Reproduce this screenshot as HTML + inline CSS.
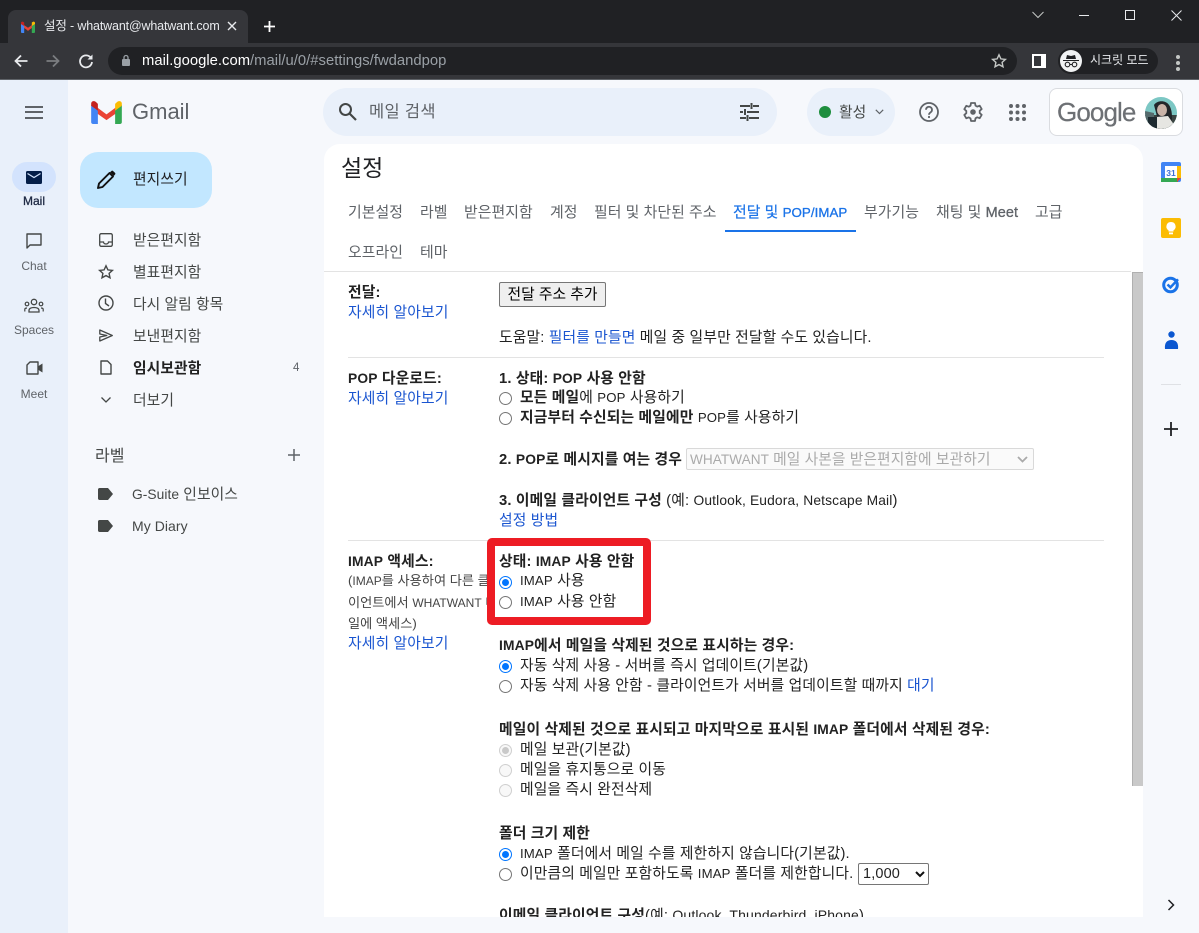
<!DOCTYPE html>
<html lang="ko"><head><meta charset="utf-8"><title>설정</title>
<style>
*{box-sizing:border-box}
html,body{margin:0;padding:0}
body{width:1199px;height:933px;overflow:hidden;position:relative;background:#f6f8fc;font-family:"Liberation Sans","Noto Sans CJK KR",sans-serif;font-size:14px;color:#222}
.a{position:absolute}
.t{position:absolute;white-space:nowrap;line-height:20px;font-size:14.8px;letter-spacing:.14px}
i{font-style:normal;font-size:13.2px}
.b{font-weight:700}
.l{color:#1a55d0}
.n{color:#444746;font-size:14.8px;margin-top:2px;letter-spacing:.05px}
.tab{color:#5f6368;font-size:14.9px;top:203px;letter-spacing:.05px}
.s{color:#5f6368;font-size:12px;text-align:center;width:68px;left:0;letter-spacing:0;margin-top:1px}
.r{position:absolute;width:13px;height:13px;border-radius:50%;border:1px solid #767676;background:#fff}
.r.on{border:1.5px solid #0075ff}
.r.on:after{content:"";position:absolute;left:1.5px;top:1.5px;width:7px;height:7px;border-radius:50%;background:#0075ff}
.r.d{border-color:#cfcfcf;background:#f8f8f8}
.hr{position:absolute;height:1px;background:#e3e3e3}
svg{position:absolute;overflow:visible}
</style></head><body>

<!-- Chrome -->
<div class="a" style="left:0;top:0;width:1199px;height:43px;background:#202124"></div>
<div class="a" style="left:8px;top:10px;width:240px;height:33px;background:#35363a;border-radius:8px 8px 0 0"></div>
<svg style="left:21px;top:21px" width="14" height="12" viewBox="0 0 14 12"><path d="M0 2l7 4.800L14 2v3L7 9.500 0 5z" fill="#ea4335"/><path d="M3 5l4 3 4-3v1L7 10 3 6z" fill="#ea4335"/><path d="M0 3v8c0 .6.400 1 1 1h2.200V5z" fill="#4285f4"/><path d="M10.800 12H13c.6 0 1-.4 1-1V3l-3.200 2z" fill="#34a853"/><path d="M10.800 1.500V5L14 3V2c0-1.200-1.200-1.700-2-1.200z" fill="#fbbc04"/><path d="M0 3V2c0-1.200 1.200-1.700 2-1.200l1.200.7V5z" fill="#c5221f"/></svg>
<div class="t" style="left:44px;top:16px;color:#e8eaed;font-size:12.500px;width:175px;overflow:hidden;letter-spacing:-.15px">설정 - whatwant@whatwant.com</div>
<svg style="left:227px;top:21px" width="10" height="10"><path d="M1 1l8 8M9 1l-8 8" stroke="#e8eaed" stroke-width="1.400"/></svg>
<svg style="left:263px;top:20px" width="13" height="13"><path d="M6.500 1v11M1 6.500h11" stroke="#fff" stroke-width="1.800"/></svg>
<svg style="left:1032px;top:11px" width="12" height="8"><path d="M.5 1l5.500 5.500L11.500 1" fill="none" stroke="#c4c7c5" stroke-width="1"/></svg>
<div class="a" style="left:1079px;top:15px;width:10px;height:1px;background:#e8eaed"></div>
<div class="a" style="left:1125px;top:10px;width:10px;height:10px;border:1px solid #e8eaed"></div>
<svg style="left:1171px;top:10px" width="11" height="11"><path d="M.5.500l10 10M10.500.500l-10 10" stroke="#e8eaed" stroke-width="1"/></svg>
<div class="a" style="left:0;top:43px;width:1199px;height:36px;background:#35363a"></div>
<div class="a" style="left:0;top:79px;width:1199px;height:1px;background:#5f6368"></div>
<svg style="left:13px;top:53px" width="16" height="16"><path d="M14.500 8H2.500M8 2.500L2.500 8 8 13.500" fill="none" stroke="#e8eaed" stroke-width="1.800"/></svg>
<svg style="left:45px;top:53px" width="16" height="16"><path d="M1.500 8h12M8 2.500L13.500 8 8 13.500" fill="none" stroke="#7b7d80" stroke-width="1.800"/></svg>
<svg style="left:78px;top:53px" width="16" height="16"><path d="M13 5A6 6 0 1 0 14 9" fill="none" stroke="#e8eaed" stroke-width="1.800"/><path d="M14.500 1.500v5h-5z" fill="#e8eaed"/></svg>
<div class="a" style="left:108px;top:47px;width:909px;height:28px;border-radius:14px;background:#202124"></div>
<svg style="left:121px;top:54px" width="10" height="13"><rect x="1" y="5" width="8" height="7" rx="1" fill="#9aa0a6"/><path d="M3 5V3.500a2 2 0 0 1 4 0V5" fill="none" stroke="#9aa0a6" stroke-width="1.300"/></svg>
<div class="t" style="left:142px;top:51px;font-size:14.800px;color:#9aa0a6;letter-spacing:.02px"><span style="color:#fff">mail.google.com</span>/mail/u/0/#settings/fwdandpop</div>
<svg style="left:991px;top:53px" width="16" height="16" viewBox="0 0 16 16"><path d="M8 1.800l1.900 4.100 4.500.5-3.300 3 .9 4.400L8 11.600l-4 2.200.9-4.400-3.300-3 4.500-.5z" fill="none" stroke="#c4c7c5" stroke-width="1.400"/></svg>
<div class="a" style="left:1032px;top:54px;width:14px;height:14px;background:#fff"></div>
<div class="a" style="left:1034px;top:56px;width:7px;height:10px;background:#35363a"></div>
<div class="a" style="left:1058px;top:48px;width:100px;height:26px;border-radius:13px;background:#202124"></div>
<div class="a" style="left:1060px;top:50px;width:22px;height:22px;border-radius:50%;background:#f1f3f4"></div>
<svg style="left:1063px;top:54px" width="16" height="14" viewBox="0 0 16 14"><path d="M0 6h16v1H0zM3 5l1-4 4 1 4-1 1 4z" fill="#202124"/><circle cx="4.500" cy="10.500" r="2.300" fill="none" stroke="#202124" stroke-width="1.100"/><circle cx="11.500" cy="10.500" r="2.300" fill="none" stroke="#202124" stroke-width="1.100"/><path d="M6.800 10.500h2.400" stroke="#202124"/></svg>
<div class="t" style="left:1090px;top:50px;color:#e8eaed;font-size:12px;letter-spacing:0">시크릿 모드</div>
<div class="a" style="left:1176px;top:55px;width:4px;height:4px;border-radius:50%;background:#c4c7c5;box-shadow:0 6px 0 #c4c7c5,0 12px 0 #c4c7c5"></div>

<!-- Left rail -->
<div class="a" style="left:0;top:80px;width:68px;height:853px;background:#e9f0fa"></div>
<div class="a" style="left:25px;top:106px;width:18px;height:2px;background:#5f6368;box-shadow:0 5px 0 #5f6368,0 11px 0 #5f6368"></div>
<svg style="left:91px;top:101px" width="31" height="23" viewBox="0 0 32 24"><path d="M2 3.500l14 10.500L30 3.500V10L16 20 2 10z" fill="#ea4335"/><path d="M0 4v18c0 1 .9 2 2 2h5V10z" fill="#4285f4"/><path d="M25 24h5c1.100 0 2-1 2-2V4l-7 6z" fill="#34a853"/><path d="M25 3v7l7-5V3c0-3-3-3.500-5-2z" fill="#fbbc04"/><path d="M0 3c0-3 3-3.500 5-2l2 2v7L0 5z" fill="#c5221f"/></svg>
<div class="t" style="left:132px;top:98px;font-size:22px;line-height:28px;color:#5f6368;letter-spacing:0">Gmail</div>

<div class="a" style="left:12px;top:162px;width:44px;height:30px;border-radius:15px;background:#d3e3fd"></div>
<svg style="left:26px;top:171px" width="16" height="13"><rect width="16" height="13" rx="1.500" fill="#041e49"/><path d="M1.500 2.500L8 6.500l6.500-4" fill="none" stroke="#d3e3fd" stroke-width="1.200"/></svg>
<div class="t s" style="top:190px;color:#1f2a44;-webkit-text-stroke:.3px #1f2a44">Mail</div>
<svg style="left:26px;top:233px" width="16" height="16" viewBox="0 0 16 16"><path d="M1 1h14v11H4l-3 3z" fill="none" stroke="#444746" stroke-width="1.400" stroke-linejoin="round"/></svg>
<div class="t s" style="top:255px">Chat</div>
<svg style="left:24px;top:298px" width="20" height="15" viewBox="0 0 20 15"><circle cx="10" cy="4" r="2.700" fill="none" stroke="#444746" stroke-width="1.300"/><circle cx="3" cy="6" r="1.800" fill="none" stroke="#444746" stroke-width="1.200"/><circle cx="17" cy="6" r="1.800" fill="none" stroke="#444746" stroke-width="1.200"/><path d="M5 14v-1.500c0-2 2.200-3 5-3s5 1 5 3V14z" fill="none" stroke="#444746" stroke-width="1.300"/><path d="M0.800 13.500v-2c0-1 1-1.500 2.200-1.500M19.200 13.500v-2c0-1-1-1.500-2.200-1.500" fill="none" stroke="#444746" stroke-width="1.200"/></svg>
<div class="t s" style="top:319px">Spaces</div>
<svg style="left:26px;top:361px" width="17" height="14" viewBox="0 0 17 14"><path d="M4 1h8v12H1V4z" fill="none" stroke="#444746" stroke-width="1.400" stroke-linejoin="round"/><path d="M12.500 5l4-2.500v9l-4-2.500z" fill="#444746"/></svg>
<div class="t s" style="top:383px">Meet</div>

<!-- Nav -->
<div class="a" style="left:80px;top:152px;width:132px;height:56px;border-radius:18px;background:#c2e7ff"></div>
<svg style="left:96px;top:170px" width="20" height="20" viewBox="0 0 20 20"><path d="M2 18l1-4.500L13.500 3l3.500 3.500L6.500 17z" fill="none" stroke="#111" stroke-width="1.900" stroke-linejoin="round"/><path d="M14 2.200l3.800 3.800 1-1.200a1.500 1.500 0 0 0 0-2.200l-1.500-1.400a1.500 1.500 0 0 0-2.100 0z" fill="#111"/></svg>
<div class="t n" style="left:133px;top:168px;color:#202124">편지쓰기</div>

<svg style="left:99px;top:233px" width="14" height="14" viewBox="0 0 14 14"><rect x=".7" y=".7" width="12.600" height="12.600" rx="1.500" fill="none" stroke="#444746" stroke-width="1.300"/><path d="M1 9h3.500c0 1.300 1.200 2 2.500 2s2.500-.7 2.500-2H13" fill="none" stroke="#444746" stroke-width="1.300"/></svg>
<div class="t n" style="left:133px;top:229px">받은편지함</div>
<svg style="left:98px;top:264px" width="16" height="16" viewBox="0 0 16 16"><path d="M8 1.800l1.900 4.100 4.500.5-3.300 3 .9 4.400L8 11.600l-4 2.200.9-4.400-3.300-3 4.500-.5z" fill="none" stroke="#444746" stroke-width="1.400"/></svg>
<div class="t n" style="left:133px;top:261px">별표편지함</div>
<svg style="left:98px;top:295px" width="16" height="16" viewBox="0 0 16 16"><circle cx="8" cy="8" r="7" fill="none" stroke="#444746" stroke-width="1.400"/><path d="M7.500 3.500V8.500l3.500 2.500" fill="none" stroke="#444746" stroke-width="1.400"/></svg>
<div class="t n" style="left:133px;top:293px">다시 알림 항목</div>
<svg style="left:99px;top:329px" width="15" height="13" viewBox="0 0 15 13"><path d="M.8 1l12.500 5.500L.8 12V8l7-1.500-7-1.500z" fill="none" stroke="#444746" stroke-width="1.300" stroke-linejoin="round"/></svg>
<div class="t n" style="left:133px;top:325px">보낸편지함</div>
<svg style="left:100px;top:360px" width="12" height="15" viewBox="0 0 12 15"><path d="M1 1h6.500L11 4.500V14H1z" fill="none" stroke="#444746" stroke-width="1.400" stroke-linejoin="round"/></svg>
<div class="t n b" style="left:133px;top:357px;color:#222">임시보관함</div>
<div class="t" style="left:293px;top:358px;font-size:11.500px;color:#5f6368">4</div>
<svg style="left:100px;top:396px" width="12" height="8"><path d="M1.500 1.500L6 6l4.500-4.500" fill="none" stroke="#444746" stroke-width="1.300"/></svg>
<div class="t n" style="left:133px;top:389px">더보기</div>

<div class="t" style="left:95px;top:447px;font-size:16px;color:#444746;letter-spacing:0">라벨</div>
<svg style="left:288px;top:449px" width="12" height="12"><path d="M6 0v12M0 6h12" stroke="#5f6368" stroke-width="1.500"/></svg>
<svg style="left:98px;top:488px" width="16" height="12"><path d="M1.500 0H10l5 6-5 6H1.500C.7 12 0 11.300 0 10.500v-9C0 .7.700 0 1.500 0z" fill="#444746"/></svg>
<div class="t n" style="left:132px;top:483px"><i style="font-size:13.800px">G-Suite</i> 인보이스</div>
<svg style="left:98px;top:520px" width="16" height="12"><path d="M1.500 0H10l5 6-5 6H1.500C.7 12 0 11.300 0 10.500v-9C0 .7.700 0 1.500 0z" fill="#444746"/></svg>
<div class="t n" style="left:132px;top:514px"><i style="font-size:14px">My Diary</i></div>

<!-- Top search -->
<div class="a" style="left:323px;top:88px;width:454px;height:48px;border-radius:24px;background:#e9f0fa"></div>
<svg style="left:338px;top:102px" width="20" height="20" viewBox="0 0 20 20"><circle cx="7.500" cy="7.500" r="5.500" fill="none" stroke="#444746" stroke-width="2"/><path d="M11.500 11.500L18 18" stroke="#444746" stroke-width="2.200"/></svg>
<div class="t" style="left:369px;top:102px;font-size:16.500px;color:#5f6368;letter-spacing:.3px">메일 검색</div>
<svg style="left:740px;top:103px" width="19" height="18" viewBox="0 0 19 18"><path d="M0 3h10M13 3h6M0 9h3M7 9h12M0 15h6M9 15h10M11.500 0v6M5 6v6M7.500 12v6" stroke="#444746" stroke-width="2" fill="none"/></svg>

<div class="a" style="left:807px;top:88px;width:88px;height:48px;border-radius:24px;background:#e9f0fa"></div>
<div class="a" style="left:819px;top:106px;width:12px;height:12px;border-radius:50%;background:#1e8e3e"></div>
<div class="t" style="left:839px;top:103px;font-size:14.800px;color:#444746;letter-spacing:0">활성</div>
<svg style="left:875px;top:109px" width="9" height="6"><path d="M.8.800L4.500 4.500 8.200.800" fill="none" stroke="#5f6368" stroke-width="1.200"/></svg>
<svg style="left:919px;top:102px" width="20" height="20" viewBox="0 0 20 20"><circle cx="10" cy="10" r="9" fill="none" stroke="#5f6368" stroke-width="1.800"/><path d="M7 7.800a3 3 0 1 1 4.600 2.500c-1 .7-1.600 1.200-1.600 2.400" fill="none" stroke="#5f6368" stroke-width="1.800"/><circle cx="10" cy="15" r="1.100" fill="#5f6368"/></svg>
<svg style="left:963px;top:102px" width="20" height="20" viewBox="0 0 20 20"><path d="M8 1h4l.5 2.600 1.700 1 2.500-.9 2 3.400-2 1.700v2.300l2 1.700-2 3.400-2.500-.9-1.700 1L12 19H8l-.5-2.600-1.700-1-2.500.9-2-3.400 2-1.700V8.900l-2-1.700 2-3.400 2.500.9 1.700-1z" fill="none" stroke="#5f6368" stroke-width="1.800" stroke-linejoin="round"/><circle cx="10" cy="10" r="2.800" fill="#5f6368"/></svg>
<svg style="left:1009px;top:104px" width="17" height="17"><g fill="#5f6368"><circle cx="2" cy="2" r="2"/><circle cx="8.500" cy="2" r="2"/><circle cx="15" cy="2" r="2"/><circle cx="2" cy="8.500" r="2"/><circle cx="8.500" cy="8.500" r="2"/><circle cx="15" cy="8.500" r="2"/><circle cx="2" cy="15" r="2"/><circle cx="8.500" cy="15" r="2"/><circle cx="15" cy="15" r="2"/></g></svg>
<div class="a" style="left:1049px;top:88px;width:134px;height:48px;border-radius:8px;background:#fff;border:1px solid #dadce0"></div>
<div class="t" style="left:1057px;top:94px;font-size:26px;line-height:36px;color:#6d7074;letter-spacing:-.9px;-webkit-text-stroke:.2px #6d7074">Google</div>
<svg style="left:1145px;top:97px" width="32" height="32" viewBox="0 0 32 32"><clipPath id="av"><circle cx="16" cy="16" r="16"/></clipPath><g clip-path="url(#av)"><rect width="32" height="32" fill="#7cc7c4"/><rect y="18" width="32" height="14" fill="#3b4442"/><path d="M0 14l9 2v16H0z" fill="#556a6c"/><path d="M9 8c3-5 12-5 15 0 3 4 4 12 2 24H12c2-8-1-16-3-24z" fill="#22262a"/><ellipse cx="17" cy="13" rx="5" ry="6" fill="#c9b3a8"/><path d="M11 20l12-1 9 13H11z" fill="#e6e6e2"/><path d="M3 20h9v12H3z" fill="#1d2a30"/></g></svg>

<!-- Main card -->
<div class="a" style="left:324px;top:144px;width:819px;height:773px;border-radius:16px 16px 0 0;background:#fff;overflow:hidden">
<div class="a" style="left:808px;top:128px;width:11px;height:514px;background:#c9c9c9;border-left:1px solid #b0b0b0;border-top:1px solid #b0b0b0"></div>
</div>

<div class="t" style="left:341px;top:153px;font-size:23px;line-height:30px;color:#202124;letter-spacing:0">설정</div>
<div class="t tab" style="left:348px">기본설정</div>
<div class="t tab" style="left:420px">라벨</div>
<div class="t tab" style="left:464px">받은편지함</div>
<div class="t tab" style="left:550px">계정</div>
<div class="t tab" style="left:594px">필터 및 차단된 주소</div>
<div class="t tab" style="left:733px;color:#1a73e8;-webkit-text-stroke:.2px #1a73e8">전달 및 <i style="font-size:13.300px;-webkit-text-stroke:.3px #1a73e8">POP/IMAP</i></div>
<div class="a" style="left:725px;top:230px;width:131px;height:2px;background:#1a73e8"></div>
<div class="t tab" style="left:864px">부가기능</div>
<div class="t tab" style="left:936px">채팅 및 <i style="font-size:14.500px;-webkit-text-stroke:.3px #5f6368">Meet</i></div>
<div class="t tab" style="left:1035px">고급</div>
<div class="t tab" style="left:348px;top:243px">오프라인</div>
<div class="t tab" style="left:420px;top:243px">테마</div>
<div class="hr" style="left:324px;top:271px;width:807px"></div>

<!-- Forwarding -->
<div class="t b" style="left:348px;top:283px">전달:</div>
<div class="t l" style="left:348px;top:303px">자세히 알아보기</div>
<div class="a" style="left:499px;top:282px;width:107px;height:25px;border:1px solid #767676;border-radius:2px;background:#efefef;text-align:center;line-height:25px;font-size:14.800px;color:#000">전달 주소 추가</div>
<div class="t" style="left:499px;top:328px">도움말: <span class="l">필터를 만들면</span> 메일 중 일부만 전달할 수도 있습니다.</div>
<div class="hr" style="left:348px;top:357px;width:756px"></div>

<!-- POP -->
<div class="t b" style="left:348px;top:369px"><i style="font-size:13.800px">POP</i> 다운로드:</div>
<div class="t l" style="left:348px;top:389px">자세히 알아보기</div>
<div class="t b" style="left:499px;top:369px">1. 상태: <i style="font-size:13.800px">POP</i> 사용 안함</div>
<div class="r" style="left:499px;top:392px"></div>
<div class="t" style="left:520px;top:388px"><b>모든 메일</b>에 <i>POP</i> 사용하기</div>
<div class="r" style="left:499px;top:412px"></div>
<div class="t" style="left:520px;top:408px"><b>지금부터 수신되는 메일에만</b> <i>POP</i>를 사용하기</div>
<div class="t b" style="left:499px;top:450px">2. <i style="font-size:13.800px">POP</i>로 메시지를 여는 경우</div>
<div class="a" style="left:686px;top:448px;width:348px;height:22px;border:1px solid #d9d9d9;border-radius:2px;background:#fafafa"></div>
<div class="t" style="left:690px;top:450px;color:#aaa;letter-spacing:.05px"><i style="font-size:13.600px">WHATWANT</i> 메일 사본을 받은편지함에 보관하기</div>
<svg style="left:1017px;top:456px" width="11" height="7"><path d="M1 1l4.500 4.500L10 1" fill="none" stroke="#aaa" stroke-width="1.800"/></svg>
<div class="t" style="left:499px;top:491px"><b>3. 이메일 클라이언트 구성</b> (예: <i style="font-size:13.800px">Outlook, Eudora, Netscape Mail</i>)</div>
<div class="t l" style="left:499px;top:511px">설정 방법</div>
<div class="hr" style="left:348px;top:540px;width:756px"></div>

<!-- IMAP left -->
<div class="t b" style="left:348px;top:552px"><i style="font-size:13.800px">IMAP</i> 액세스:</div>
<div class="t" style="left:348px;top:571px;font-size:13.200px;color:#444;letter-spacing:0;width:139px;overflow:hidden">(<i style="font-size:12px">IMAP</i>를 사용하여 다른 클라</div>
<div class="t" style="left:348px;top:593px;font-size:13.200px;color:#444;letter-spacing:0;width:139px;overflow:hidden">이언트에서 <i style="font-size:12px">WHATWANT</i> 메</div>
<div class="t" style="left:348px;top:614px;font-size:13.200px;color:#444;letter-spacing:0">일에 액세스)</div>
<div class="t l" style="left:348px;top:634px">자세히 알아보기</div>

<!-- Red box -->
<div class="a" style="left:487px;top:538px;width:164px;height:87px;border:8px solid #ed1c24;border-radius:5px;background:#fff"></div>
<div class="t b" style="left:499px;top:552px">상태: <i style="font-size:13.800px">IMAP</i> 사용 안함</div>
<div class="r on" style="left:499px;top:576px"></div>
<div class="t" style="left:520px;top:571px"><i>IMAP</i> 사용</div>
<div class="r" style="left:499px;top:596px"></div>
<div class="t" style="left:520px;top:592px"><i>IMAP</i> 사용 안함</div>

<div class="t b" style="left:499px;top:636px"><i style="font-size:13.800px">IMAP</i>에서 메일을 삭제된 것으로 표시하는 경우:</div>
<div class="r on" style="left:499px;top:660px"></div>
<div class="t" style="left:520px;top:656px">자동 삭제 사용 - 서버를 즉시 업데이트(기본값)</div>
<div class="r" style="left:499px;top:680px"></div>
<div class="t" style="left:520px;top:676px">자동 삭제 사용 안함 - 클라이언트가 서버를 업데이트할 때까지 <span class="l">대기</span></div>

<div class="t b" style="left:499px;top:720px">메일이 삭제된 것으로 표시되고 마지막으로 표시된 <i style="font-size:13.800px">IMAP</i> 폴더에서 삭제된 경우:</div>
<div class="r d" style="left:499px;top:744px"></div>
<div class="a" style="left:502px;top:747px;width:7px;height:7px;border-radius:50%;background:#c9c9c9"></div>
<div class="t" style="left:520px;top:740px">메일 보관(기본값)</div>
<div class="r d" style="left:499px;top:764px"></div>
<div class="t" style="left:520px;top:760px">메일을 휴지통으로 이동</div>
<div class="r d" style="left:499px;top:784px"></div>
<div class="t" style="left:520px;top:780px">메일을 즉시 완전삭제</div>

<div class="t b" style="left:499px;top:824px">폴더 크기 제한</div>
<div class="r on" style="left:499px;top:848px"></div>
<div class="t" style="left:520px;top:844px"><i>IMAP</i> 폴더에서 메일 수를 제한하지 않습니다(기본값).</div>
<div class="r" style="left:499px;top:868px"></div>
<div class="t" style="left:520px;top:864px">이만큼의 메일만 포함하도록 <i>IMAP</i> 폴더를 제한합니다.</div>
<div class="a" style="left:858px;top:863px;width:71px;height:22px;border:1px solid #767676;border-radius:2px;background:#fff"></div>
<div class="t" style="left:863px;top:864px;font-size:14.500px">1,000</div>
<svg style="left:915px;top:871px" width="10" height="7"><path d="M1 1l4 4 4-4" fill="none" stroke="#111" stroke-width="2"/></svg>
<div class="t" style="left:499px;top:905px"><b>이메일 클라이언트 구성</b>(예: <i style="font-size:14px">Outlook, Thunderbird, iPhone</i>)</div>
<div class="a" style="left:324px;top:917px;width:819px;height:16px;background:#f6f8fc"></div>

<!-- Right rail icons -->
<svg style="left:1161px;top:162px" width="20" height="20" viewBox="0 0 20 20"><rect width="20" height="20" rx="2" fill="#4285f4"/><rect x="4" y="4" width="12" height="12" fill="#fff"/><rect x="16" y="4" width="4" height="12" fill="#fbbc04"/><rect y="16" width="17" height="4" fill="#34a853"/><path d="M16 16h4l-4 4z" fill="#ea4335"/><text x="10" y="14" font-size="8.500" font-weight="700" text-anchor="middle" fill="#3b6fd4" font-family="Liberation Sans">31</text></svg>
<div class="a" style="left:1161px;top:218px;width:20px;height:20px;border-radius:2px;background:#fbbc04"></div>
<svg style="left:1166px;top:222px" width="10" height="13" viewBox="0 0 10 13"><path d="M5 0a4.500 4.500 0 0 0-2.500 8.300V9.500h5V8.300A4.500 4.500 0 0 0 5 0z" fill="#fff"/><rect x="3" y="10.500" width="4" height="1.800" fill="#fff"/></svg>
<svg style="left:1162px;top:275px" width="19" height="19" viewBox="0 0 19 19"><circle cx="8.500" cy="10" r="6.800" fill="none" stroke="#1a73e8" stroke-width="3"/><path d="M5.500 9.500l3 2.800 7.500-8" fill="none" stroke="#1a73e8" stroke-width="2.500"/></svg>
<svg style="left:1164px;top:331px" width="15" height="18" viewBox="0 0 15 18"><circle cx="7.500" cy="3.500" r="3.200" fill="#0b57d0"/><path d="M1 18c-.7-6 1.800-9 6.500-9s7.200 3 6.500 9z" fill="#0b57d0"/></svg>
<div class="a" style="left:1161px;top:384px;width:20px;height:1px;background:#dfe1e5"></div>
<svg style="left:1164px;top:422px" width="14" height="14"><path d="M7 0v14M0 7h14" stroke="#202124" stroke-width="1.800"/></svg>
<svg style="left:1167px;top:899px" width="8" height="12"><path d="M1.500 1l5 5-5 5" fill="none" stroke="#202124" stroke-width="1.500"/></svg>
</body></html>
